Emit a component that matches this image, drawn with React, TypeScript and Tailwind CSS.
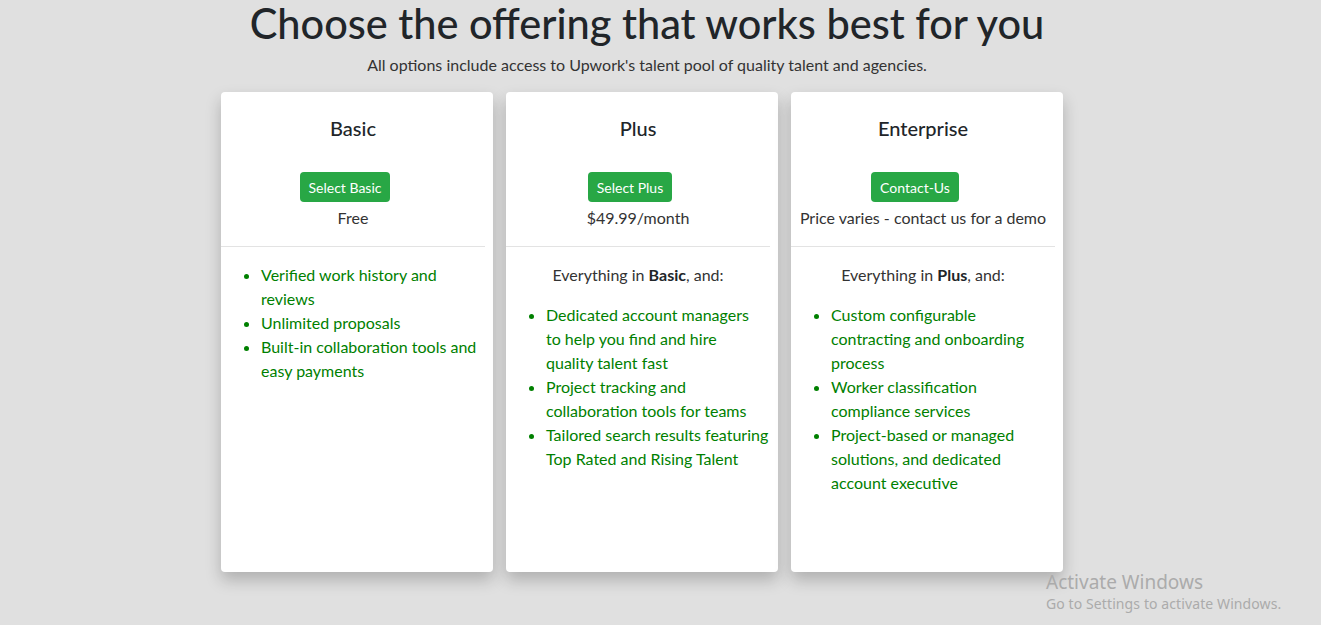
import type { ReactNode } from 'react';

type Plan = {
  name: string;
  button: string;
  price: string;
  intro: string | null;
  items: ReactNode[];
};

const plans: Plan[] = [
  {
    name: 'Basic',
    button: 'Select Basic',
    price: 'Free',
    intro: null,
    items: ['Verified work history and reviews', 'Unlimited proposals', 'Built-in collaboration tools and easy payments'],
  },
  {
    name: 'Plus',
    button: 'Select Plus',
    price: '$49.99/month',
    intro: 'Basic',
    items: [
      <>
        Dedicated account managers
        <br />
        to help you find and hire
        <br />
        quality talent fast
      </>,
      'Project tracking and collaboration tools for teams',
      'Tailored search results featuring Top Rated and Rising Talent',
    ],
  },
  {
    name: 'Enterprise',
    button: 'Contact-Us',
    price: 'Price varies - contact us for a demo',
    intro: 'Plus',
    items: [
      'Custom configurable contracting and onboarding process',
      'Worker classification compliance services',
      'Project-based or managed solutions, and dedicated account executive',
    ],
  },
];

const PlanCard = ({ plan }: { plan: Plan }) => {
  return (
    <div className="w-[272px] h-[480px] bg-white rounded-[4px] shadow-[0_8px_16px_rgba(0,0,0,0.22)] pr-[8px]">
      <div className="pt-[24px] text-center text-[20px] leading-[24px] font-medium text-[#212529]">{plan.name}</div>
      <div className="flex justify-center mt-[32px]">
        <button className="mr-[16px] h-[30px] px-[9px] rounded-[4px] bg-[#28a745] text-white text-[14px]">
          {plan.button}
        </button>
      </div>
      <div className="mt-[4px] text-center text-[16px] leading-[24px] text-[#333]">{plan.price}</div>
      <div className="mt-[16px] h-px bg-[#e3e3e3]"></div>
      {plan.intro && (
        <div className="mt-[16px] text-center text-[16px] leading-[24px] text-[#333]">
          Everything in <b className="font-bold text-[#212529]">{plan.intro}</b>, and:
        </div>
      )}
      <ul className="list-disc mt-[16px] pl-[40px] text-[16px] leading-[24px] text-[#008000]">
        {plan.items.map((item, i) => (
          <li key={i}>{item}</li>
        ))}
      </ul>
    </div>
  );
};

const App = () => {
  return (
    <div className="relative min-h-[625px] bg-[#e0e0e0] font-['Lato','Noto_Sans',sans-serif] overflow-hidden">
      <h1 className="pr-[27px] text-center text-[41.5px] leading-[46px] font-medium text-[#212529]">
        Choose the offering that works best for you
      </h1>
      <p className="pr-[27px] mt-[7px] text-center text-[16px] leading-[24px] text-[#333]">
        All options include access to Upwork's talent pool of quality talent and agencies.
      </p>
      <div className="flex justify-center gap-[13px] pr-[37px] mt-[15px]">
        {plans.map((plan) => (
          <PlanCard key={plan.name} plan={plan} />
        ))}
      </div>
      <div className="absolute left-[1046px] top-[570px] text-[#ababab] font-['Noto_Sans',sans-serif]">
        <div className="text-[19px] leading-[24px]">Activate Windows</div>
        <div className="text-[14px] leading-[20px] tracking-[0.1px]">Go to Settings to activate Windows.</div>
      </div>
    </div>
  );
};

export default App;
